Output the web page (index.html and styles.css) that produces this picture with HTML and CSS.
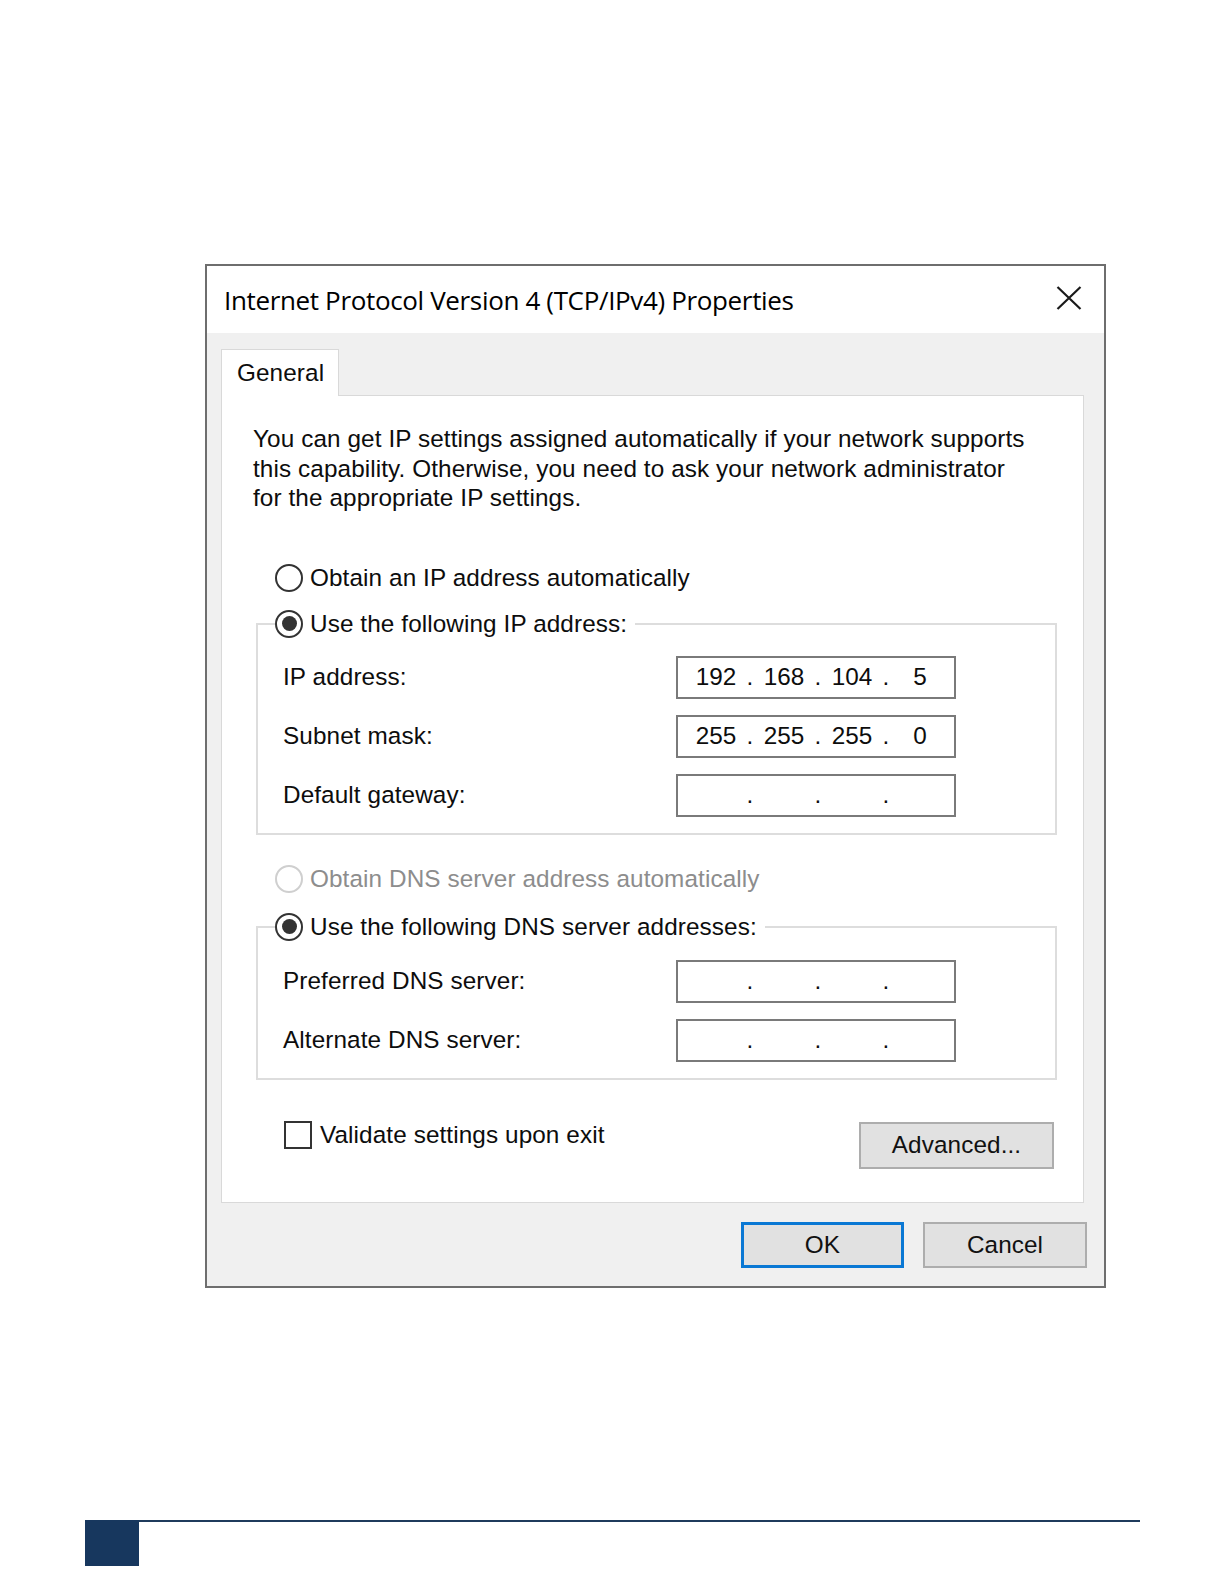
FILE: index.html
```html
<!DOCTYPE html>
<html lang="en">
<head>
<meta charset="utf-8">
<title>Internet Protocol Version 4 (TCP/IPv4) Properties</title>
<link rel="stylesheet" href="styles.css">
</head>
<body>
<div class="page">
  <div class="dialog">
    <div class="titlebar">
      <span class="title">Internet Protocol Version 4 (TCP/IPv4) Properties</span>
      <svg class="close" width="26" height="24" viewBox="0 0 26 24" aria-hidden="true">
        <path d="M1.5 1 L24.5 23 M24.5 1 L1.5 23" stroke="#1a1a1a" stroke-width="2.2" fill="none"/>
      </svg>
    </div>
    <div class="dlgbody">
      <div class="tabs"><div class="tab">General</div></div>
      <div class="panel">
        <p class="intro">You can get IP settings assigned automatically if your network supports<br>this capability. Otherwise, you need to ask your network administrator<br>for the appropriate IP settings.</p>

        <div class="opt first"><span class="radio"></span><span>Obtain an IP address automatically</span></div>

        <fieldset class="group g1">
          <legend class="opt-legend"><span class="radio on"></span><span>Use the following IP address:</span></legend>
          <div class="rows">
            <span class="lbl">IP address:</span>
            <div class="ip"><span>192</span><span>.</span><span>168</span><span>.</span><span>104</span><span>.</span><span>5</span></div>
            <span class="lbl">Subnet mask:</span>
            <div class="ip"><span>255</span><span>.</span><span>255</span><span>.</span><span>255</span><span>.</span><span>0</span></div>
            <span class="lbl">Default gateway:</span>
            <div class="ip"><span></span><span>.</span><span></span><span>.</span><span></span><span>.</span><span></span></div>
          </div>
        </fieldset>

        <div class="opt dns-auto disabled"><span class="radio off"></span><span>Obtain DNS server address automatically</span></div>

        <fieldset class="group g2">
          <legend class="opt-legend"><span class="radio on"></span><span>Use the following DNS server addresses:</span></legend>
          <div class="rows">
            <span class="lbl">Preferred DNS server:</span>
            <div class="ip"><span></span><span>.</span><span></span><span>.</span><span></span><span>.</span><span></span></div>
            <span class="lbl">Alternate DNS server:</span>
            <div class="ip"><span></span><span>.</span><span></span><span>.</span><span></span><span>.</span><span></span></div>
          </div>
        </fieldset>

        <div class="bottomrow">
          <div class="check"><span class="box"></span><span>Validate settings upon exit</span></div>
          <div class="btn advanced">Advanced...</div>
        </div>
      </div>
      <div class="buttons">
        <div class="btn ok">OK</div>
        <div class="btn cancel">Cancel</div>
      </div>
    </div>
  </div>
  <div class="footer">
    <div class="footer-block"></div>
    <div class="footer-rule"></div>
  </div>
</div>
</body>
</html>
```

FILE: styles.css
```css
html, body {
  margin: 0;
  padding: 0;
  background: #ffffff;
}

body {
  font-family: "Liberation Sans", Arial, sans-serif;
  font-size: 24.3px;
  letter-spacing: 0.1px;
  color: #0d0d0d;
}

.page {
  width: 1224px;
  height: 1584px;
  overflow: hidden;
  display: flow-root;
}

.dialog {
  box-sizing: border-box;
  width: 901px;
  margin: 264px 0 0 205px;
  border: 2px solid #6e6e6e;
  background: #f0f0f0;
}

.titlebar {
  height: 67px;
  background: #ffffff;
  display: flex;
  align-items: center;
  justify-content: space-between;
  padding: 0 22px 0 17px;
}

.title {
  font-family: "Open Sans", "Liberation Sans", sans-serif;
  font-size: 26px;
  letter-spacing: -0.35px;
  color: #000000;
}

.close {
  display: block;
  margin-top: -4px;
}

.dlgbody {
  padding: 16px 17px 18px 14px;
}

.tabs {
  display: flex;
}

.tab {
  box-sizing: border-box;
  width: 118px;
  height: 47px;
  line-height: 46px;
  padding-left: 15px;
  background: #ffffff;
  border: 1px solid #d9d9d9;
  border-bottom: none;
  margin-bottom: -1px;
  position: relative;
  z-index: 1;
}

.panel {
  background: #ffffff;
  border: 1px solid #d9d9d9;
  margin-right: 3px;
  padding: 28px 26px 33px 31px;
}

.intro {
  margin: 0;
  line-height: 29.5px;
}

.opt, .opt-legend {
  display: flex;
  align-items: center;
  gap: 7px;
  height: 30px;
}

.opt {
  margin-left: 22px;
}

.opt.first {
  margin-top: 50px;
}

.opt.dns-auto {
  margin-top: 29px;
}

.disabled {
  color: #8d8d8d;
}

.radio {
  box-sizing: border-box;
  width: 28px;
  height: 28px;
  border: 2px solid #333333;
  border-radius: 50%;
  background: #ffffff;
  display: flex;
  align-items: center;
  justify-content: center;
  flex: none;
}

.radio.on::after {
  content: "";
  width: 15px;
  height: 15px;
  border-radius: 50%;
  background: #333333;
}

.radio.off {
  border-color: #cfcfcf;
}

.group {
  margin: 16px 0 0 3px;
  padding: 0;
  border: 2px solid #dddddd;
  min-width: 0;
}

.group.g2 {
  margin-top: 18px;
}

.opt-legend {
  margin-left: 17px;
  padding: 0 8px 0 0;
}

.rows {
  display: grid;
  grid-template-columns: 393px 280px;
  row-gap: 16px;
  align-items: center;
  padding: 17px 0 16px 25px;
}

.g2 .rows {
  padding-top: 18px;
}

.ip {
  box-sizing: border-box;
  height: 43px;
  border: 2px solid #7a7a7a;
  background: #ffffff;
  display: grid;
  grid-template-columns: 60px 8px 60px 8px 60px 8px 60px;
  align-items: center;
  text-align: center;
  padding-left: 8px;
  letter-spacing: 0;
}

.bottomrow {
  display: flex;
  justify-content: space-between;
  align-items: flex-start;
  margin-top: 41px;
}

.check {
  display: flex;
  align-items: center;
  gap: 8px;
  margin-left: 31px;
  height: 28px;
}

.box {
  box-sizing: border-box;
  width: 28px;
  height: 28px;
  border: 2px solid #333333;
  background: #ffffff;
  flex: none;
}

.btn {
  box-sizing: border-box;
  display: flex;
  align-items: center;
  justify-content: center;
  background: #e1e1e1;
  border: 2px solid #adadad;
  color: #111111;
}

.advanced {
  width: 195px;
  height: 47px;
  margin-top: 1px;
  margin-right: 3px;
}

.buttons {
  display: flex;
  justify-content: flex-end;
  gap: 19px;
  margin-top: 19px;
}

.ok {
  width: 163px;
  height: 46px;
  border: 3px solid #0a78d4;
}

.cancel {
  width: 164px;
  height: 46px;
}

.footer {
  display: flex;
  width: 1055px;
  margin: 232px 0 0 85px;
}

.footer-block {
  width: 54px;
  height: 46px;
  background: #17375e;
  flex: none;
}

.footer-rule {
  flex: 1;
  height: 2px;
  background: #1f3b5c;
}
```
